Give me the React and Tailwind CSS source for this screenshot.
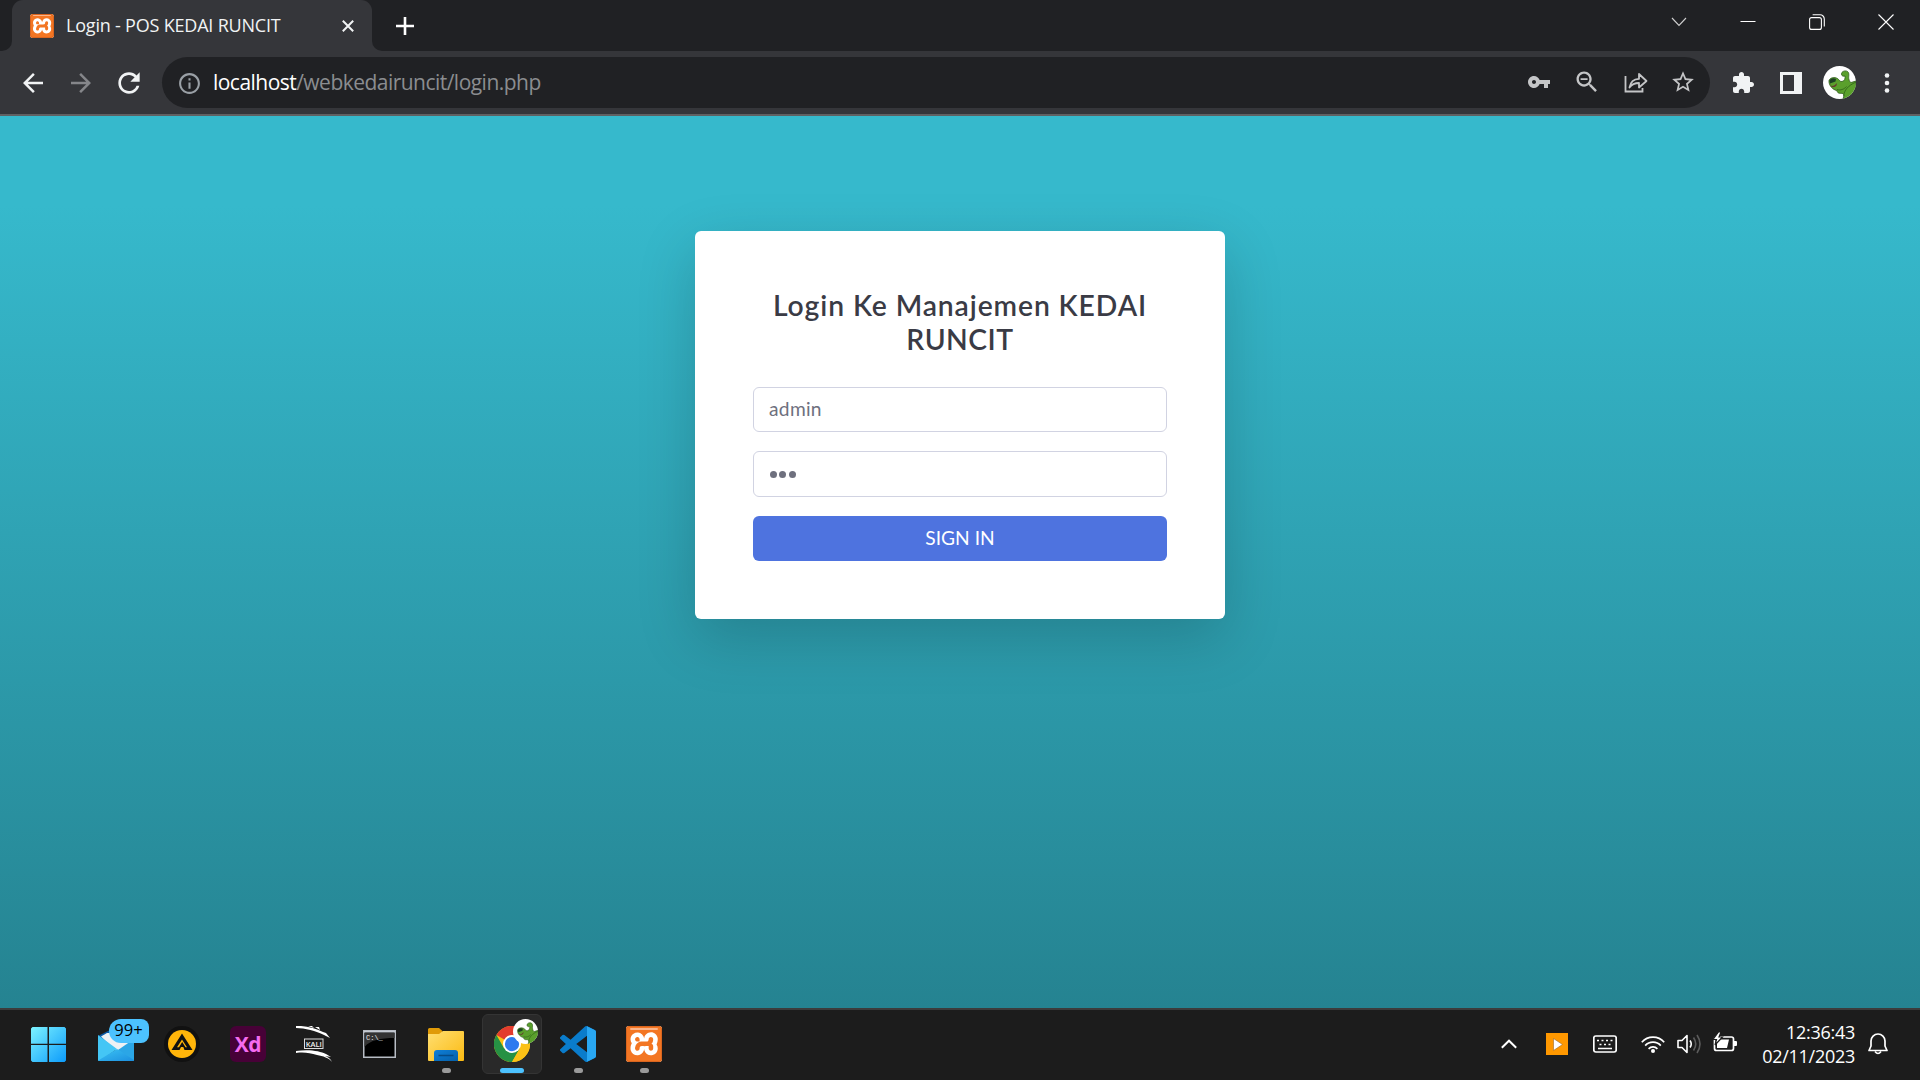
import React from "react";
import { SiXampp } from "react-icons/si";

const SEGOE = "font-['Open_Sans','Noto_Sans',sans-serif]";
const NUNITO = "font-[Lato,'Noto_Sans',sans-serif]";

function Material({ d, size, className = "" }) {
  return (
    <svg viewBox="0 0 24 24" width={size} height={size} className={`shrink-0 ${className}`} fill="currentColor">
      <path d={d} />
    </svg>
  );
}

const BACK = "M20 11H7.83l5.59-5.59L12 4l-8 8 8 8 1.41-1.41L7.83 13H20v-2z";
const FORWARD = "M12 4l-1.41 1.41L16.17 11H4v2h12.17l-5.58 5.59L12 20l8-8z";
const RELOAD =
  "M17.65 6.35C16.2 4.9 14.21 4 12 4c-4.42 0-7.99 3.58-7.99 8s3.57 8 7.99 8c3.73 0 6.84-2.55 7.73-6h-2.08c-.82 2.33-3.04 4-5.65 4-3.31 0-6-2.69-6-6s2.69-6 6-6c1.66 0 3.14.69 4.22 1.78L13 11h7V4l-2.35 2.35z";
const INFO =
  "M11 17h2v-6h-2v6zm1-15C6.48 2 2 6.48 2 12s4.48 10 10 10 10-4.48 10-10S17.52 2 12 2zm0 18c-4.41 0-8-3.59-8-8s3.59-8 8-8 8 3.59 8 8-3.59 8-8 8zM11 9h2V7h-2v2z";
const STAR =
  "M22 9.24l-7.19-.62L12 2 9.19 8.63 2 9.24l5.46 4.73L5.82 21 12 17.27 18.18 21l-1.63-7.03L22 9.24zM12 15.4l-3.76 2.27 1-4.28-3.32-2.88 4.38-.38L12 6.1l1.71 4.04 4.38.38-3.32 2.88 1 4.28L12 15.4z";
const KEY =
  "M12.65 10C11.83 7.67 9.61 6 7 6c-3.31 0-6 2.69-6 6s2.69 6 6 6c2.61 0 4.83-1.67 5.65-4H17v4h4v-4h2v-4H12.65zM7 14c-1.1 0-2-.9-2-2s.9-2 2-2 2 .9 2 2-.9 2-2 2z";
const PUZZLE =
  "M20.5 11H19V7c0-1.1-.9-2-2-2h-4V3.5C13 2.12 11.88 1 10.5 1S8 2.12 8 3.5V5H4c-1.1 0-1.99.9-1.99 2v3.8H3.5c1.49 0 2.7 1.21 2.7 2.7s-1.21 2.7-2.7 2.7H2V20c0 1.1.9 2 2 2h3.8v-1.5c0-1.49 1.21-2.7 2.7-2.7 1.49 0 2.7 1.21 2.7 2.7V22H17c1.1 0 2-.9 2-2v-4h1.5c1.38 0 2.5-1.12 2.5-2.5S21.88 11 20.5 11z";
const ZOOM_OUT =
  "M15.5 14h-.79l-.28-.27C15.41 12.59 16 11.11 16 9.5 16 5.91 13.09 3 9.5 3S3 5.91 3 9.5 5.91 16 9.5 16c1.61 0 3.09-.59 4.23-1.57l.27.28v.79l5 4.99L20.49 19l-4.99-5zm-6 0C7.01 14 5 11.99 5 9.5S7.01 5 9.5 5 14 7.01 14 9.5 11.99 14 9.5 14zM6.500 8.700h6v1.500h-6z";
const VSCODE =
  "M23.15 2.587L18.21.21a1.494 1.494 0 0 0-1.705.29l-9.46 8.63-4.12-3.128a.999.999 0 0 0-1.276.057L.327 7.261A1 1 0 0 0 .326 8.74L3.899 12 .326 15.26a1 1 0 0 0 .001 1.479L1.65 17.94a.999.999 0 0 0 1.276.057l4.12-3.128 9.46 8.63a1.492 1.492 0 0 0 1.704.29l4.942-2.377A1.5 1.5 0 0 0 24 20.06V3.939a1.5 1.5 0 0 0-.85-1.352zm-5.146 14.861L10.826 12l7.178-5.448v10.896z";

function Xampp({ className }) {
  return (
    <span className={`relative flex shrink-0 items-center justify-center overflow-hidden rounded-[3px] bg-white ${className}`}>
      <SiXampp className="h-full w-full scale-[1.04] text-[#f37623]" />
      <span className="absolute inset-0 rounded-[3px] border border-[#d9651f]" />
      <span className="absolute inset-x-[12%] top-[6%] h-[6%] rounded-full bg-[#fbb58a]" />
    </span>
  );
}

function Avatar({ size }) {
  return (
    <svg viewBox="0 0 33 33" width={size} height={size} className="shrink-0">
      <defs>
        <clipPath id="face">
          <circle cx="16.5" cy="16.5" r="16.5" />
        </clipPath>
      </defs>
      <g clipPath="url(#face)">
        <rect width="33" height="33" fill="#fff" />
        <path
          d="M6 14.500C7 11.500 11.500 10.800 14.500 12.500c1.500 1 2.500 3.500 4.500 3 2.500-.5 3.500-3 3-5.500-1.500.5-3.500.2-3.500-2 0-2.500 3.500-4 6-2.500 2.500 2 .5 5.500 1.500 8 .5 1.500.5 2.500 2 3l5-1.500v18H20l1-3.500c-.3-1.800-1.500-2.200-3-2.200-2.500.3-4-.8-4-2.800-4-.5-8.500-5-8-10z"
          fill="#5aa02c"
          stroke="#2d5a1b"
          strokeWidth=".8"
        />
        <path d="M20.500 30c1-6 4-10 12.500-14M14 23.500c3.500 1 7 0 9.500-3" stroke="#31611b" strokeWidth=".8" fill="none" />
        <path d="M6.500 14.500c1.500-2.500 4-2.800 6.500-1.500l-.5 2.500-5.500 2z" fill="#1e4023" />
        <path d="M7 18.500c2 2.500 4 2 7-1.500l-.5 2.500c-2.500 2.500-5 2-6.500-1z" fill="#66372e" />
      </g>
    </svg>
  );
}

function TitleBar() {
  return (
    <div className="flex h-[51px] shrink-0 bg-[#202124]">
      <div className="flex w-3 shrink-0 bg-[#35363a]">
        <div className="w-full rounded-br-[10px] bg-[#202124]" />
      </div>
      <div className="flex h-full w-[360px] shrink-0 items-center rounded-t-[11px] bg-[#35363a] pl-[18px]">
        <Xampp className="h-6 w-6" />
        <span className={`ml-3 w-[276px] whitespace-nowrap text-[18px] tracking-[-0.2px] text-[#f1f3f4] ${SEGOE}`}>
          Login - POS KEDAI RUNCIT
        </span>
        <svg viewBox="0 0 12 12" className="h-3 w-3 shrink-0" stroke="#f1f3f4" strokeWidth="2">
          <path d="M.8.8l10.4 10.4M11.2.8L.8 11.2" />
        </svg>
      </div>
      <div className="flex min-w-0 flex-1 bg-[#35363a]">
        <div className="flex w-full items-start rounded-bl-[10px] bg-[#202124]">
          <svg viewBox="0 0 18 18" className="mt-[17px] ml-6 h-[18px] w-[18px] shrink-0" stroke="#fff" strokeWidth="2.6">
            <path d="M9 0v18M0 9h18" />
          </svg>
          <div className="mt-3 ml-auto flex h-5 items-center pr-[26px]">
            <svg viewBox="0 0 16 16" className="h-4 w-4" fill="none" stroke="#d0d0d0" strokeWidth="1.1">
              <path d="M1 4l7 7.5L15 4" />
            </svg>
            <svg viewBox="0 0 16 16" className="ml-[53px] h-4 w-4" stroke="#fff" strokeWidth="1">
              <path d="M.5 7.5h15" />
            </svg>
            <svg viewBox="0 0 16 16" className="ml-[53px] h-4 w-4" fill="none" stroke="#fff" strokeWidth="1.1">
              <rect x=".6" y="3.6" width="11.8" height="11.8" rx="2" />
              <path d="M3.6 .8h7.4a4.2 4.2 0 0 1 4.3 4.2v7.5" />
            </svg>
            <svg viewBox="0 0 16 16" className="ml-[53px] h-4 w-4" stroke="#fff" strokeWidth="1.1">
              <path d="M.5.5l15 15M15.5.5l-15 15" />
            </svg>
          </div>
        </div>
      </div>
    </div>
  );
}

function Toolbar() {
  return (
    <div className="flex h-[65px] shrink-0 items-center border-b-2 border-[#606163] bg-[#35363a] text-[#f1f3f4]">
      <Material d={BACK} size={30} className="ml-[18px]" />
      <Material d={FORWARD} size={30} className="ml-[18px] text-[#85868a]" />
      <Material d={RELOAD} size={32} className="ml-[17px]" />
      <div className="ml-[17px] flex h-[51px] w-[1548px] shrink-0 items-center rounded-full bg-[#202124] text-[#c4c5c7]">
        <Material d={INFO} size={25} className="mt-px ml-[15px] text-[#9aa0a6]" />
        <span className={`ml-[11px] whitespace-nowrap text-[21px] tracking-[-0.53px] text-[#8b8d90] ${SEGOE}`}>
          <span className="text-white">localhost</span>/webkedairuncit/login.php
        </span>
        <div className="ml-auto flex items-center pr-[14px] pb-px">
          <Material d={KEY} size={24} />
          <Material d={ZOOM_OUT} size={28} className="ml-[22px]" />
          <svg viewBox="0 0 24 22" className="ml-[23px] h-[22px] w-6" fill="none" stroke="currentColor" strokeWidth="1.8">
            <path d="M1.5 5v15.500h17V17" />
            <path d="M5.500 16.500c1-6 4-8.500 9.500-8.700V3l7.500 7-7.500 6.500V12c-4.500 0-7 1-9.500 4.500z" strokeLinejoin="round" />
          </svg>
          <Material d={STAR} size={26} className="ml-[22px]" />
        </div>
      </div>
      <Material d={PUZZLE} size={24} className="ml-[21px]" />
      <svg viewBox="0 0 22 22" className="ml-[25px] h-[22px] w-[22px] shrink-0">
        <path fill="currentColor" fillRule="evenodd" d="M0 0h22v22H0zM3 3v16h11V3z" />
      </svg>
      <span className="ml-[21px]">
        <Avatar size={33} />
      </span>
      <svg viewBox="0 0 6 20" className="ml-7 h-5 w-1.5 shrink-0" fill="currentColor">
        <circle cx="3" cy="2.500" r="2.300" />
        <circle cx="3" cy="10" r="2.300" />
        <circle cx="3" cy="17.500" r="2.300" />
      </svg>
    </div>
  );
}

function LoginPage() {
  return (
    <main className={`flex h-[892px] shrink-0 items-start justify-center bg-[linear-gradient(180deg,#36b9cc_10%,#258391_100%)] pt-[115px] ${NUNITO}`}>
      <form className="flex h-[388px] w-[530px] flex-col rounded-[6px] bg-white px-[58px] pt-[57px] shadow-[0_19px_58px_rgba(0,0,0,0.175)]">
        <h1 className="text-center text-[28.3px] leading-[34px] font-semibold whitespace-nowrap text-[#3a3b45]">
          <span className="block tracking-[0.9px]">Login Ke Manajemen KEDAI</span>
          <span className="block tracking-[0.5px]">RUNCIT</span>
        </h1>
        <div className="mt-[31px] flex h-[45px] items-center rounded-[6px] border border-[#d1d3e2] px-[15px] pb-0.5 text-[19.2px] leading-none tracking-[0.3px] text-[#6e707e]">admin</div>
        <div className="mt-[19px] flex h-[46px] items-center gap-[2.400px] rounded-[6px] border border-[#d1d3e2] px-4 pt-px">
          <span className="h-[7px] w-[7px] rounded-full bg-[#6e707e]" />
          <span className="h-[7px] w-[7px] rounded-full bg-[#6e707e]" />
          <span className="h-[7px] w-[7px] rounded-full bg-[#6e707e]" />
        </div>
        <button type="button" className="mt-[19px] flex h-[45px] items-center justify-center rounded-[6px] bg-[#4e73df] pb-0.5 text-[19.2px] leading-none text-white">
          SIGN IN
        </button>
      </form>
    </main>
  );
}

function Slot({ children, running }) {
  return (
    <div className="relative flex h-[60px] w-[66px] shrink-0 items-center justify-center">
      {children}
      {running && <span className="absolute bottom-px left-[29px] h-[5px] w-[9px] rounded-full bg-[#9a9a9a]" />}
    </div>
  );
}

function Taskbar() {
  return (
    <footer className="flex h-[72px] shrink-0 items-start border-t-2 border-[#3c3c3c] bg-[#1c1c1c] pt-1 pl-[15px]">
      <div className="flex h-[60px] w-[67px] shrink-0 items-center justify-center">
        <svg viewBox="0 0 35 35" className="h-[35px] w-[35px]">
          <defs>
            <linearGradient id="win" x1="0" y1="0" x2="35" y2="35" gradientUnits="userSpaceOnUse">
              <stop stopColor="#7df3ff" />
              <stop offset="1" stopColor="#0c9bfb" />
            </linearGradient>
          </defs>
          <path fill="url(#win)" d="M1.500 0h15v16.700H0V1.500zM18 0h15.500L35 1.500v15.200H18zM0 18h16.500v17h-15L0 33.500zM18 18h17v15.500L33.500 35H18z" />
        </svg>
      </div>
      <div className="ml-px flex">
        <Slot>
          <svg viewBox="0 0 36 34" className="h-[34px] w-9">
            <defs>
              <linearGradient id="mail" x1="0" y1="0" x2="1" y2="1">
                <stop stopColor="#3cc4f4" />
                <stop offset="1" stopColor="#1c8fdf" />
              </linearGradient>
            </defs>
            <path fill="#0c59a4" d="M0 9L18 0l18 9v9H0z" />
            <path fill="#eef1f4" d="M3 9.500L9 6h24v12l-15 6z" />
            <path fill="#2ba6e6" d="M36 12v21a1 1 0 0 1-1 1H4z" />
            <path fill="#44c6f5" d="M0 8l19 14L2 34H1a1 1 0 0 1-1-1z" />
            <path fill="url(#mail)" d="M19 22l17 11q-.3 1-1 1H1q-.5 0-.8-.5z" />
          </svg>
          <span className={`absolute top-[5px] left-[26px] flex h-6 w-10 items-center justify-center rounded-l-[12px] rounded-r-[8px] bg-[#4cc2ff] pr-px pb-px text-[16.5px] leading-none text-black ${SEGOE}`}>
            99+
          </span>
        </Slot>
        <Slot>
          <svg viewBox="0 0 36 36" className="h-9 w-9">
            <circle cx="18" cy="18" r="18" fill="#111" />
            <circle cx="18" cy="18" r="14" fill="#ffb50a" />
            <path fill="#111" fillRule="evenodd" d="M18 7.500L28.500 24h-8l-1.200-3H17l-1.500 3H7.500zM18 13.500L13 21.300h2l3.200-5.300 3.300 5.300H23z" />
          </svg>
        </Slot>
        <Slot>
          <span className="flex h-9 w-9 items-center justify-center rounded-[6px] bg-[#470137] font-['Open_Sans',sans-serif] text-[21px] leading-none font-bold tracking-[-0.5px] text-[#f56bf0]">Xd</span>
        </Slot>
        <Slot>
          <svg viewBox="0 0 36 36" className="h-9 w-9">
            <path fill="#fff" d="M0 0c10-.5 19 2 27 6l3 1 4 5-6-3C20 5 9 2 0 2zM12 0l6 2-2-2zM19 1l5 3-1-3zM0 25c13-2 24 0 30 3l5 3-6-1c5 2 6 4 7 6-3-4-9-6-15-7-7-2-13-3-21-2z" />
            <rect x="8.500" y="13" width="18.500" height="9.500" fill="none" stroke="#ddd" strokeWidth="1" />
            <text x="17.800" y="20.600" textAnchor="middle" fill="#eee" fontSize="7.500" fontWeight="600" fontFamily="Open Sans, sans-serif">KALI</text>
          </svg>
        </Slot>
        <Slot>
          <svg viewBox="0 0 33 28" className="mr-px h-7 w-[33px]">
            <rect x=".75" y=".75" width="31.500" height="26.500" fill="#000" stroke="#b7bcc4" strokeWidth="1.500" />
            <path d="M1.500 3h30v5C18 8 7 10 1.500 17z" fill="#333" />
            <path d="M1 1h31v1.500H1z" fill="#c5cad2" />
            <text x="3" y="10" fill="#eee" fontSize="7" fontFamily="Liberation Mono, monospace">C:\_</text>
          </svg>
        </Slot>
        <Slot running>
          <svg viewBox="0 0 36 33" className="h-[33px] w-9">
            <defs>
              <linearGradient id="folder" x1="0" y1="0" x2="1" y2="1">
                <stop stopColor="#ffdf72" />
                <stop offset="1" stopColor="#fbba12" />
              </linearGradient>
              <linearGradient id="pocket" x1="0" y1="0" x2="1" y2="1">
                <stop stopColor="#0f7fd8" />
                <stop offset="1" stopColor="#0560aa" />
              </linearGradient>
            </defs>
            <path fill="#e09b08" d="M0 1.500Q0 0 1.500 0H11l4 3.500h-1V8H0z" />
            <path fill="url(#folder)" d="M0 6h11l4-3h20q1 0 1 1v28q0 1-1 1H1q-1 0-1-1z" />
            <path fill="url(#pocket)" d="M6 33v-8q0-3 3-3h18q3 0 3 3v8z" />
            <path d="M10.500 27.500h15" stroke="#064b86" strokeWidth="1.500" />
          </svg>
        </Slot>
        <Slot>
          <div className="relative flex h-[60px] w-[60px] items-center justify-center rounded-[6px] border border-[#343434] bg-[#292929]">
            <svg viewBox="0 0 48 48" className="h-9 w-9">
              <circle cx="24" cy="24" r="24" fill="#fbc116" />
              <path fill="#e33b2e" d="M24 24L3.200 12A24 24 0 0 1 44.800 12H24z" />
              <path fill="#269144" d="M3.200 12A24 24 0 0 0 24 48l10.400-18L24 24 13.600 30z" />
              <path fill="#fbc116" d="M24 48A24 24 0 0 0 44.800 12H24l10.400 18z" />
              <circle cx="24" cy="24" r="12" fill="#fff" />
              <circle cx="24" cy="24" r="9.500" fill="#2f7bef" />
            </svg>
            <span className="absolute top-1 left-[30px]">
              <Avatar size={25} />
            </span>
            <span className="absolute bottom-0 left-[17px] h-[5px] w-6 rounded-full bg-[#4cc2ff]" />
          </div>
        </Slot>
        <Slot running>
          <svg viewBox="0 0 24 24" className="h-9 w-9">
            <path d={VSCODE} fill="#0a7ccb" />
            <path d="M18.004.2v23.600l5.100-2.400q.9-.5.9-1.400V4q0-1-.9-1.400z" fill="#29a7f2" />
          </svg>
        </Slot>
        <Slot running>
          <Xampp className="h-9 w-9" />
        </Slot>
      </div>
      <div className="ml-auto flex h-[60px] items-center pr-8 text-white">
        <svg viewBox="0 0 16 10" className="h-2.5 w-4" fill="none" stroke="currentColor" strokeWidth="2">
          <path d="M.8 8.700L8 1.700l7.200 7" />
        </svg>
        <span className="ml-[29px] flex h-[22px] w-[22px] items-center justify-center bg-[#ff9800]">
          <svg viewBox="0 0 10 13" className="ml-0.5 h-[13px] w-2.5">
            <path d="M.5.500l9 6-9 6z" fill="#fff" stroke="#9b6a2c" strokeWidth=".6" />
          </svg>
        </span>
        <svg viewBox="0 0 24 18" className="ml-[25px] h-[18px] w-6" fill="none" stroke="currentColor" strokeWidth="1.700">
          <rect x=".8" y="1" width="22.400" height="16" rx="2" />
          <path d="M4 5.500h2m2.500 0h2m2.500 0h2m2.500 0h2M6.500 9.500h2m2.500 0h2m2.500 0h2M5 13.500h14" />
        </svg>
        <svg viewBox="0 0 24 18" className="ml-6 h-[18px] w-6" fill="none" stroke="currentColor" strokeWidth="1.700">
          <path d="M.8 7.200a15 15 0 0 1 22.400 0M4.200 10.600a10.500 10.500 0 0 1 15.600 0M7.600 13.800a6 6 0 0 1 8.800 0" />
          <circle cx="12" cy="16" r="2" fill="currentColor" stroke="none" />
        </svg>
        <svg viewBox="0 0 24 20" className="ml-3 h-5 w-6" fill="none" stroke="currentColor" strokeWidth="1.600">
          <path d="M1 6.500h4l5-5v17l-5-5H1z" strokeLinejoin="round" />
          <path d="M13 6.500q2.500 3.500 0 7" />
          <path d="M16.500 3.500q4.500 6.500 0 13M20 1q6 9 0 18" stroke="#5c5c5c" />
        </svg>
        <svg viewBox="0 0 24 20" className="mb-1 ml-3 h-5 w-6">
          <rect x="1.500" y="5" width="19" height="13.500" rx="2" fill="none" stroke="currentColor" strokeWidth="1.700" />
          <path d="M4 7.500h12l-2 8.500H4zM21 9h2q1 0 1 1v3q0 1-1 1h-2z" fill="currentColor" />
          <path d="M5.500 0L0 7.500h3.500L2 13l7.500-8H6L8 0z" fill="currentColor" stroke="#1c1c1c" strokeWidth="1.200" />
        </svg>
        <div className={`ml-[23px] w-[95px] pb-px text-right text-[18px] leading-6 tracking-[-0.28px] whitespace-nowrap ${SEGOE}`}>
          <div>12:36:43</div>
          <div>02/11/2023</div>
        </div>
        <svg viewBox="0 0 20 22" className="ml-[13px] h-[22px] w-5" fill="none" stroke="currentColor" strokeWidth="1.700">
          <path d="M1 17.500l2-4.500V8a7 7 0 0 1 14 0v5l2 4.500z" strokeLinejoin="round" />
          <path d="M7 18.500q3 4 6 0" />
        </svg>
      </div>
    </footer>
  );
}

export default function App() {
  return (
    <div className="flex h-[1080px] w-[1920px] flex-col overflow-hidden">
      <TitleBar />
      <Toolbar />
      <LoginPage />
      <Taskbar />
    </div>
  );
}
